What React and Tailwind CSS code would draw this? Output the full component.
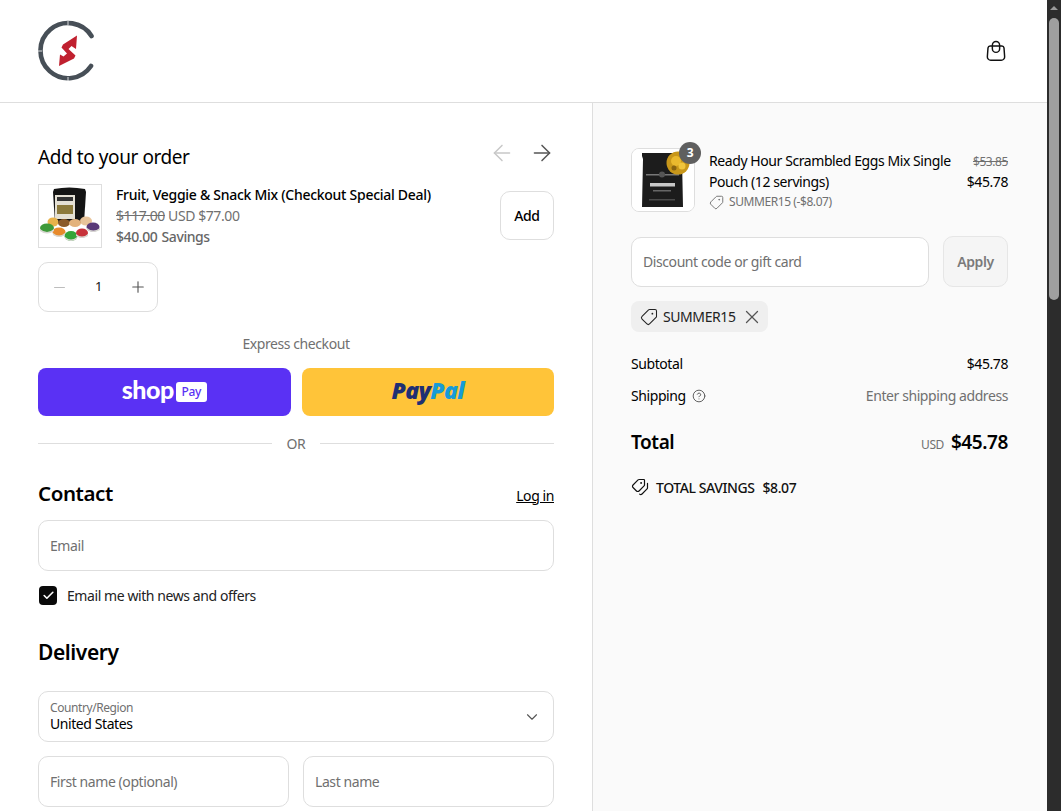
import React from "react";
import { ArrowLeft, ArrowRight, Minus, Plus, ChevronDown, X, Check, Tag, Tags, CircleHelp } from "lucide-react";

const Logo = () => (
  <svg width="60" height="62" viewBox="0 0 60 62" fill="none">
    <path d="M54.5 16 A27.6 27.6 0 1 0 54 46" stroke="#474f57" strokeWidth="4.6" strokeLinecap="round" />
    <path d="M31 1v4M31 57v4M1 31h4" stroke="#fff" strokeWidth="0.8" />
    <path d="M40 15.5 L39 29 L34.5 26 L31.5 29 L38.5 35.5 L37 38.5 L22 46 L23 34.5 L26.5 36.5 L30 33.5 L24.5 27.5 L26 24.5 Z" fill="#c0202f" />
  </svg>
);

const Bag = () => (
  <svg width="20" height="22" viewBox="0 0 22 24" fill="none" stroke="#111" strokeWidth="1.6" strokeLinejoin="round">
    <path d="M4.5 6.5h13a2.5 2.5 0 0 1 2.3 2.1l.7 9.4a3.8 3.8 0 0 1-3.8 4.2H5.3A3.8 3.8 0 0 1 1.5 18l.7-9.4a2.5 2.5 0 0 1 2.3-2.1Z" />
    <path d="M7 9.5V5.6a4 4 0 0 1 8 0v3.9a4 4 0 0 1-8 0Z" />
  </svg>
);

const BundleThumb = () => (
  <svg width="62" height="62" viewBox="0 0 62 62">
    <rect width="62" height="62" fill="#fff" />
    <path d="M15 4q15-3 31 0l1 3-2 31H16L14 7Z" fill="#141414" />
    <rect x="16" y="10" width="20" height="24" fill="#e4e0d4" />
    <rect x="18" y="12" width="16" height="4" fill="#333" />
    <rect x="18" y="20" width="16" height="9" fill="#8c7a3c" />
    <ellipse cx="14" cy="37" rx="5.5" ry="4.5" fill="#e8b24a" />
    <ellipse cx="47" cy="36" rx="6" ry="4.5" fill="#e8c49a" />
    <ellipse cx="25" cy="38" rx="6" ry="4" fill="#8a5a2a" />
    <ellipse cx="36" cy="38" rx="6" ry="4" fill="#e3b27c" />
    <ellipse cx="8" cy="43" rx="7" ry="4.5" fill="#3f9a3a" />
    <ellipse cx="20" cy="47" rx="6.5" ry="4.5" fill="#e78a2c" />
    <ellipse cx="32" cy="51" rx="6.5" ry="5" fill="#35a53a" />
    <ellipse cx="43" cy="48" rx="6" ry="4.5" fill="#c7323a" />
    <ellipse cx="54" cy="42" rx="6.5" ry="4.5" fill="#5a3a78" />
    <path d="M1 44q7 6 14 0v2q-7 5-14 0ZM14 48q6 5 12 0v2q-6 4-12 0ZM26 52q6 5 12 0v2q-6 4-12 0ZM37 49q6 5 12 0v2q-6 4-12 0ZM48 43q6 5 13 0v2q-7 4-13 0Z" fill="#d8d8d2" />
  </svg>
);

const PouchThumb = () => (
  <svg width="62" height="62" viewBox="0 0 62 62">
    <rect width="62" height="62" fill="#fff" />
    <path d="M10 4h41v3l-1 3 1 48H10l1-48-1-3Z" fill="#1c1c1c" />
    <rect x="14" y="25" width="33" height="1.5" fill="#777" />
    <circle cx="30" cy="25.5" r="3" fill="#555" />
    <rect x="18" y="34" width="25" height="3.5" fill="#c8c8c8" />
    <rect x="21" y="41" width="18" height="1.5" fill="#666" />
    <rect x="17" y="50" width="26" height="1.5" fill="#4a4a4a" />
    <circle cx="46" cy="14" r="11.5" fill="#c8971a" />
    <circle cx="44" cy="12" r="5" fill="#eab92e" />
    <circle cx="50" cy="17" r="3.5" fill="#f0c53c" />
    <circle cx="42" cy="19" r="2.5" fill="#8a6410" />
    <circle cx="51" cy="9" r="2" fill="#7a5a10" />
  </svg>
);

const Field = ({ placeholder, className = "" }) => (
  <div className={`h-[51px] flex items-center px-[11px] bg-white border border-[#dedede] rounded-[10px] text-[14px] text-[#707070] ${className}`}>
    {placeholder}
  </div>
);

export default function App() {
  return (
    <div className="h-screen flex overflow-hidden bg-white text-[14px] text-black" style={{ fontFamily: '"Noto Sans", "Open Sans", sans-serif', letterSpacing: "-0.03em" }}>
      <div className="flex-1 min-w-0 flex flex-col">
        <header className="h-[103px] shrink-0 flex items-center justify-between pl-[37px] pr-[41px] border-b border-[#dedede]">
          <Logo />
          <Bag />
        </header>
        <div className="flex-1 min-h-0 flex">
          <main className="w-[593px] shrink-0 border-r border-[#dedede] pl-[38px] pr-[38px] pt-[38px]">
            <div className="flex items-center justify-between h-[24px]">
              <h2 className="text-[19px] leading-[30px] mt-[8px] font-normal">Add to your order</h2>
              <div className="flex items-center gap-[14px] -mr-[1px]">
                <ArrowLeft size={26} strokeWidth={1.4} className="text-[#c8c8c8]" />
                <ArrowRight size={26} strokeWidth={1.4} className="text-[#555]" />
              </div>
            </div>
            <div className="flex items-start mt-[19px] h-[64px]">
              <div className="w-[64px] h-[64px] border border-[#dedede] shrink-0"><BundleThumb /></div>
              <div className="ml-[14px] flex-1 min-w-0">
                <div className="text-[14px] leading-[21px] font-medium tracking-[-0.02em]">Fruit, Veggie &amp; Snack Mix (Checkout Special Deal)</div>
                <div className="text-[14px] leading-[21px] text-[#707070]"><span className="line-through">$117.00</span> USD $77.00</div>
                <div className="text-[14px] leading-[21px] text-[#666] font-medium">$40.00 <span className="ml-[1px]">Savings</span></div>
              </div>
              <button className="mt-[7px] w-[54px] h-[49px] bg-white border border-[#dedede] rounded-[10px] text-[14px] font-medium">Add</button>
            </div>
            <div className="mt-[14px] w-[120px] h-[50px] border border-[#dedede] rounded-[10px] flex items-center justify-between pl-[12px] pr-[10px]">
              <Minus size={17} strokeWidth={1.5} className="text-[#bdbdbd]" />
              <span className="text-[13px] text-[#111]">1</span>
              <Plus size={18} strokeWidth={1.5} className="text-[#555]" />
            </div>
            <div className="mt-[22px] text-center text-[14px] leading-[20px] text-[#707070]">Express checkout</div>
            <div className="mt-[14px] flex gap-[11px]">
              <div className="flex-1 h-[48px] rounded-[8px] bg-[#5a31f4] flex items-center justify-center gap-[2px] text-white">
                <span className="text-[25px] leading-none font-black -mt-[5px]" style={{ fontFamily: '"Lato", sans-serif', letterSpacing: "-0.02em" }}>shop</span>
                <span className="w-[31px] h-[20px] bg-white text-[#5a31f4] rounded-[3px] text-[12px] leading-[20px] text-center font-medium">Pay</span>
              </div>
              <div className="flex-1 h-[48px] rounded-[8px] bg-[#ffc439] flex items-center justify-center">
                <span className="text-[23px] font-black italic leading-none -mt-[3px]" style={{ fontFamily: '"Open Sans", sans-serif', letterSpacing: "-0.03em" }}>
                  <span className="text-[#1f2f73]">Pay</span><span className="text-[#179bd7]">Pal</span>
                </span>
              </div>
            </div>
            <div className="mt-[17px] flex items-center h-[20px] text-[14px] text-[#707070]">
              <div className="flex-1 h-px bg-[#dedede]" />
              <span className="w-[48px] text-center">OR</span>
              <div className="flex-1 h-px bg-[#dedede]" />
            </div>
            <div className="mt-[26px] flex items-center justify-between h-[32px]">
              <h2 className="text-[20.5px] font-semibold -mt-[4px]">Contact</h2>
              <a className="text-[14px] underline">Log in</a>
            </div>
            <Field placeholder="Email" className="mt-[9px]" />
            <label className="mt-[15px] flex items-center h-[19px]">
              <span className="w-[18px] h-[19px] ml-[1px] rounded-[4px] bg-[#0a0a0a] flex items-center justify-center">
                <Check size={13} strokeWidth={3} className="text-white" />
              </span>
              <span className="ml-[10px] text-[14px] text-[#222]">Email me with news and offers</span>
            </label>
            <h2 className="mt-[31px] text-[21px] leading-[32px] font-semibold">Delivery</h2>
            <div className="mt-[23px] h-[51px] bg-white border border-[#dedede] rounded-[10px] px-[11px] flex items-center justify-between">
              <div className="-mt-[2px]">
                <div className="text-[12px] leading-[16px] text-[#707070]">Country/Region</div>
                <div className="text-[14px] leading-[16px]">United States</div>
              </div>
              <ChevronDown size={18} strokeWidth={1.5} className="text-[#555] mr-[1px]" />
            </div>
            <div className="mt-[14px] flex gap-[14px]">
              <Field placeholder="First name (optional)" className="flex-1" />
              <Field placeholder="Last name" className="flex-1" />
            </div>
          </main>
          <aside className="flex-1 min-w-0 bg-[#fafafa] pl-[38px] pr-[39px] pt-[45px]">
            <div className="flex">
              <div className="relative w-[64px] h-[64px] shrink-0 bg-white border border-[#dedede] rounded-[8px]">
                <div className="overflow-hidden rounded-[7px] w-[62px] h-[62px]"><PouchThumb /></div>
                <span className="absolute -top-[7px] -right-[7px] w-[22px] h-[22px] rounded-full bg-[#5f5f5f] text-white text-[12px] font-bold flex items-center justify-center">3</span>
              </div>
              <div className="ml-[14px] flex-1 min-w-0 pt-[2px]">
                <div className="text-[14px] leading-[21px]">Ready Hour Scrambled Eggs Mix Single Pouch (12 servings)</div>
                <div className="mt-px flex items-center gap-[5px] text-[12px] leading-[18px] text-[#707070]">
                  <Tag size={15} strokeWidth={1.5} className="-scale-x-100" />
                  <span>SUMMER15 (-$8.07)</span>
                </div>
              </div>
              <div className="w-[46px] shrink-0 text-right pt-[4px]">
                <div className="text-[12px] leading-[20px] text-[#707070] line-through">$53.85</div>
                <div className="text-[14px] leading-[20px]">$45.78</div>
              </div>
            </div>
            <div className="mt-[24px] flex gap-[14px]">
              <div className="flex-1 mt-px h-[50px] flex items-center px-[11px] pb-px bg-white border border-[#dedede] rounded-[10px] text-[14px] text-[#707070]">Discount code or gift card</div>
              <button className="w-[65px] h-[51px] bg-[#f5f5f5] border border-[#e6e6e6] rounded-[10px] text-[14px] font-semibold text-[#7a7a7a]">Apply</button>
            </div>
            <div className="mt-[14px] w-fit h-[31px] bg-[#efefef] rounded-[8px] pl-[9px] pr-[5px] flex items-center text-[14px] text-[#222]">
              <Tag size={18} strokeWidth={1.4} className="-scale-x-100" />
              <span className="ml-[5px]">SUMMER15</span>
              <X size={22} strokeWidth={1.4} className="ml-[6px] text-[#555]" />
            </div>
            <div className="mt-[21px] flex items-center justify-between h-[21px] text-[14px]">
              <span>Subtotal</span><span>$45.78</span>
            </div>
            <div className="mt-[11px] flex items-center justify-between h-[21px] text-[14px]">
              <span className="flex items-center gap-[6px]">Shipping <CircleHelp size={14} strokeWidth={1.6} className="text-[#555]" /></span>
              <span className="text-[#707070]">Enter shipping address</span>
            </div>
            <div className="mt-[22px] flex items-center justify-between h-[28px]">
              <span className="text-[19px] font-semibold">Total</span>
              <span className="flex items-baseline gap-[7px]"><span className="text-[12px] text-[#707070]">USD</span><span className="text-[19px] font-semibold">$45.78</span></span>
            </div>
            <div className="mt-[21px] flex items-center h-[20px] text-[14px] font-medium text-[#111]">
              <Tags size={18} strokeWidth={1.6} className="-scale-x-100" />
              <span className="ml-[7px]">TOTAL SAVINGS</span>
              <span className="ml-[8px]">$8.07</span>
            </div>
          </aside>
        </div>
      </div>
      <div className="w-[14px] shrink-0 bg-[#2c2c2c] flex flex-col items-center pt-[6px]">
        <div className="w-0 h-0 border-l-[4px] border-r-[4px] border-b-[4px] border-l-transparent border-r-transparent border-b-[#9a9a9a]" />
        <div className="mt-[8px] w-[10px] h-[282px] rounded-full bg-[#9f9f9f]" />
      </div>
    </div>
  );
}
